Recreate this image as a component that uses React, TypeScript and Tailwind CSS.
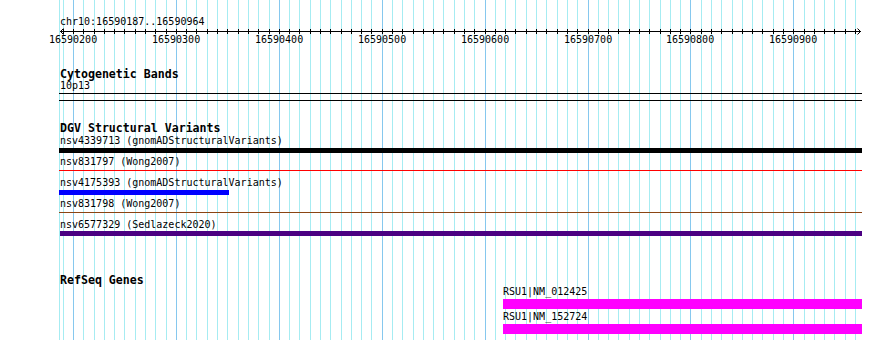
import React from "react";

const gridXs: { x: number; major: boolean }[] = [];
for (let k = -1; k <= 76; k++) {
  gridXs.push({ x: Math.round(73 + 10.29 * k), major: k % 10 === 0 });
}
const majors = gridXs.filter((g) => g.major);

function Grid() {
  return (
    <div className="absolute inset-0">
      <div className="absolute top-0 bottom-0 w-px bg-[#a6ecf2]" style={{ left: 59 }} />
      {gridXs.map((g) => (
        <div
          key={g.x}
          className={g.major ? "absolute top-0 bottom-0 w-px bg-[#86c8ee]" : "absolute top-0 bottom-0 w-px bg-[#a6ecf2]"}
          style={{ left: g.x }}
        />
      ))}
    </div>
  );
}

function Ruler() {
  return (
    <svg className="block mt-[1px]" width={890} height={7} viewBox="0 0 890 7">
      <line x1={60} y1={3.5} x2={861} y2={3.5} stroke="#000" strokeWidth={1} />
      {gridXs.map((g) => (
        <line key={g.x} x1={g.x + 0.5} y1={1} x2={g.x + 0.5} y2={6} stroke="#000" strokeWidth={1} />
      ))}
      <polyline points="63.5,0.5 60.5,3.5 63.5,6.5" fill="none" stroke="#000" strokeWidth={1} />
      <polyline points="857.5,0.5 860.5,3.5 857.5,6.5" fill="none" stroke="#000" strokeWidth={1} />
    </svg>
  );
}

export default function App() {
  return (
    <div className="relative w-[890px] h-[340px] overflow-hidden bg-white text-black font-['DejaVu_Sans_Mono',monospace] text-[10px] leading-[10px]">
      <Grid />
      <div className="relative flex flex-col">
        <div className="pl-[60px] pt-[17px] h-[27px] whitespace-nowrap">chr10:16590187..16590964</div>
        <Ruler />
        <div className="relative h-[10px]">
          {majors.map((g, i) => (
            <div key={g.x} className="absolute top-0 w-[48px] text-center" style={{ left: g.x - 24 }}>
              {16590200 + i * 100}
            </div>
          ))}
        </div>

        <div className="mt-[23px] pl-[60px] h-[12px] font-bold text-[11.6px] leading-[12px] whitespace-nowrap">Cytogenetic Bands</div>
        <div className="mt-[1px] pl-[60px] h-[10px]">10p13</div>
        <div className="mt-[2px] ml-[59px] w-[803px] h-px bg-black" />
        <div className="mt-[6px] ml-[59px] w-[803px] h-px bg-black" />

        <div className="mt-[21px] pl-[60px] h-[12px] font-bold text-[11.6px] leading-[12px] whitespace-nowrap">DGV Structural Variants</div>
        <div className="mt-[2px] pl-[60px] h-[10px] whitespace-nowrap">nsv4339713 (gnomADStructuralVariants)</div>
        <div className="mt-[2px] ml-[59px] w-[803px] h-[5px] bg-black" />
        <div className="mt-[4px] pl-[60px] h-[10px] whitespace-nowrap">nsv831797 (Wong2007)</div>
        <div className="mt-[3px] ml-[59px] w-[803px] h-px bg-[#ff0000]" />
        <div className="mt-[7px] pl-[60px] h-[10px] whitespace-nowrap">nsv4175393 (gnomADStructuralVariants)</div>
        <div className="mt-[2px] ml-[59px] w-[170px] h-[5px] bg-[#0000ff]" />
        <div className="mt-[4px] pl-[60px] h-[10px] whitespace-nowrap">nsv831798 (Wong2007)</div>
        <div className="mt-[3px] ml-[59px] w-[803px] h-px bg-[#8b4513]" />
        <div className="mt-[7px] pl-[60px] h-[10px] whitespace-nowrap">nsv6577329 (Sedlazeck2020)</div>
        <div className="mt-[1px] ml-[60px] w-[802px] h-[5px] bg-[#4b0082]" />

        <div className="mt-[38px] pl-[60px] h-[12px] font-bold text-[11.6px] leading-[12px] whitespace-nowrap">RefSeq Genes</div>
        <div className="mt-[1px] pl-[503px] h-[10px] whitespace-nowrap">RSU1|NM_012425</div>
        <div className="mt-[2px] ml-[503px] w-[359px] h-[10px] bg-[#ff00ff]" />
        <div className="mt-[3px] pl-[503px] h-[10px] whitespace-nowrap">RSU1|NM_152724</div>
        <div className="mt-[2px] ml-[503px] w-[359px] h-[10px] bg-[#ff00ff]" />
      </div>
    </div>
  );
}
